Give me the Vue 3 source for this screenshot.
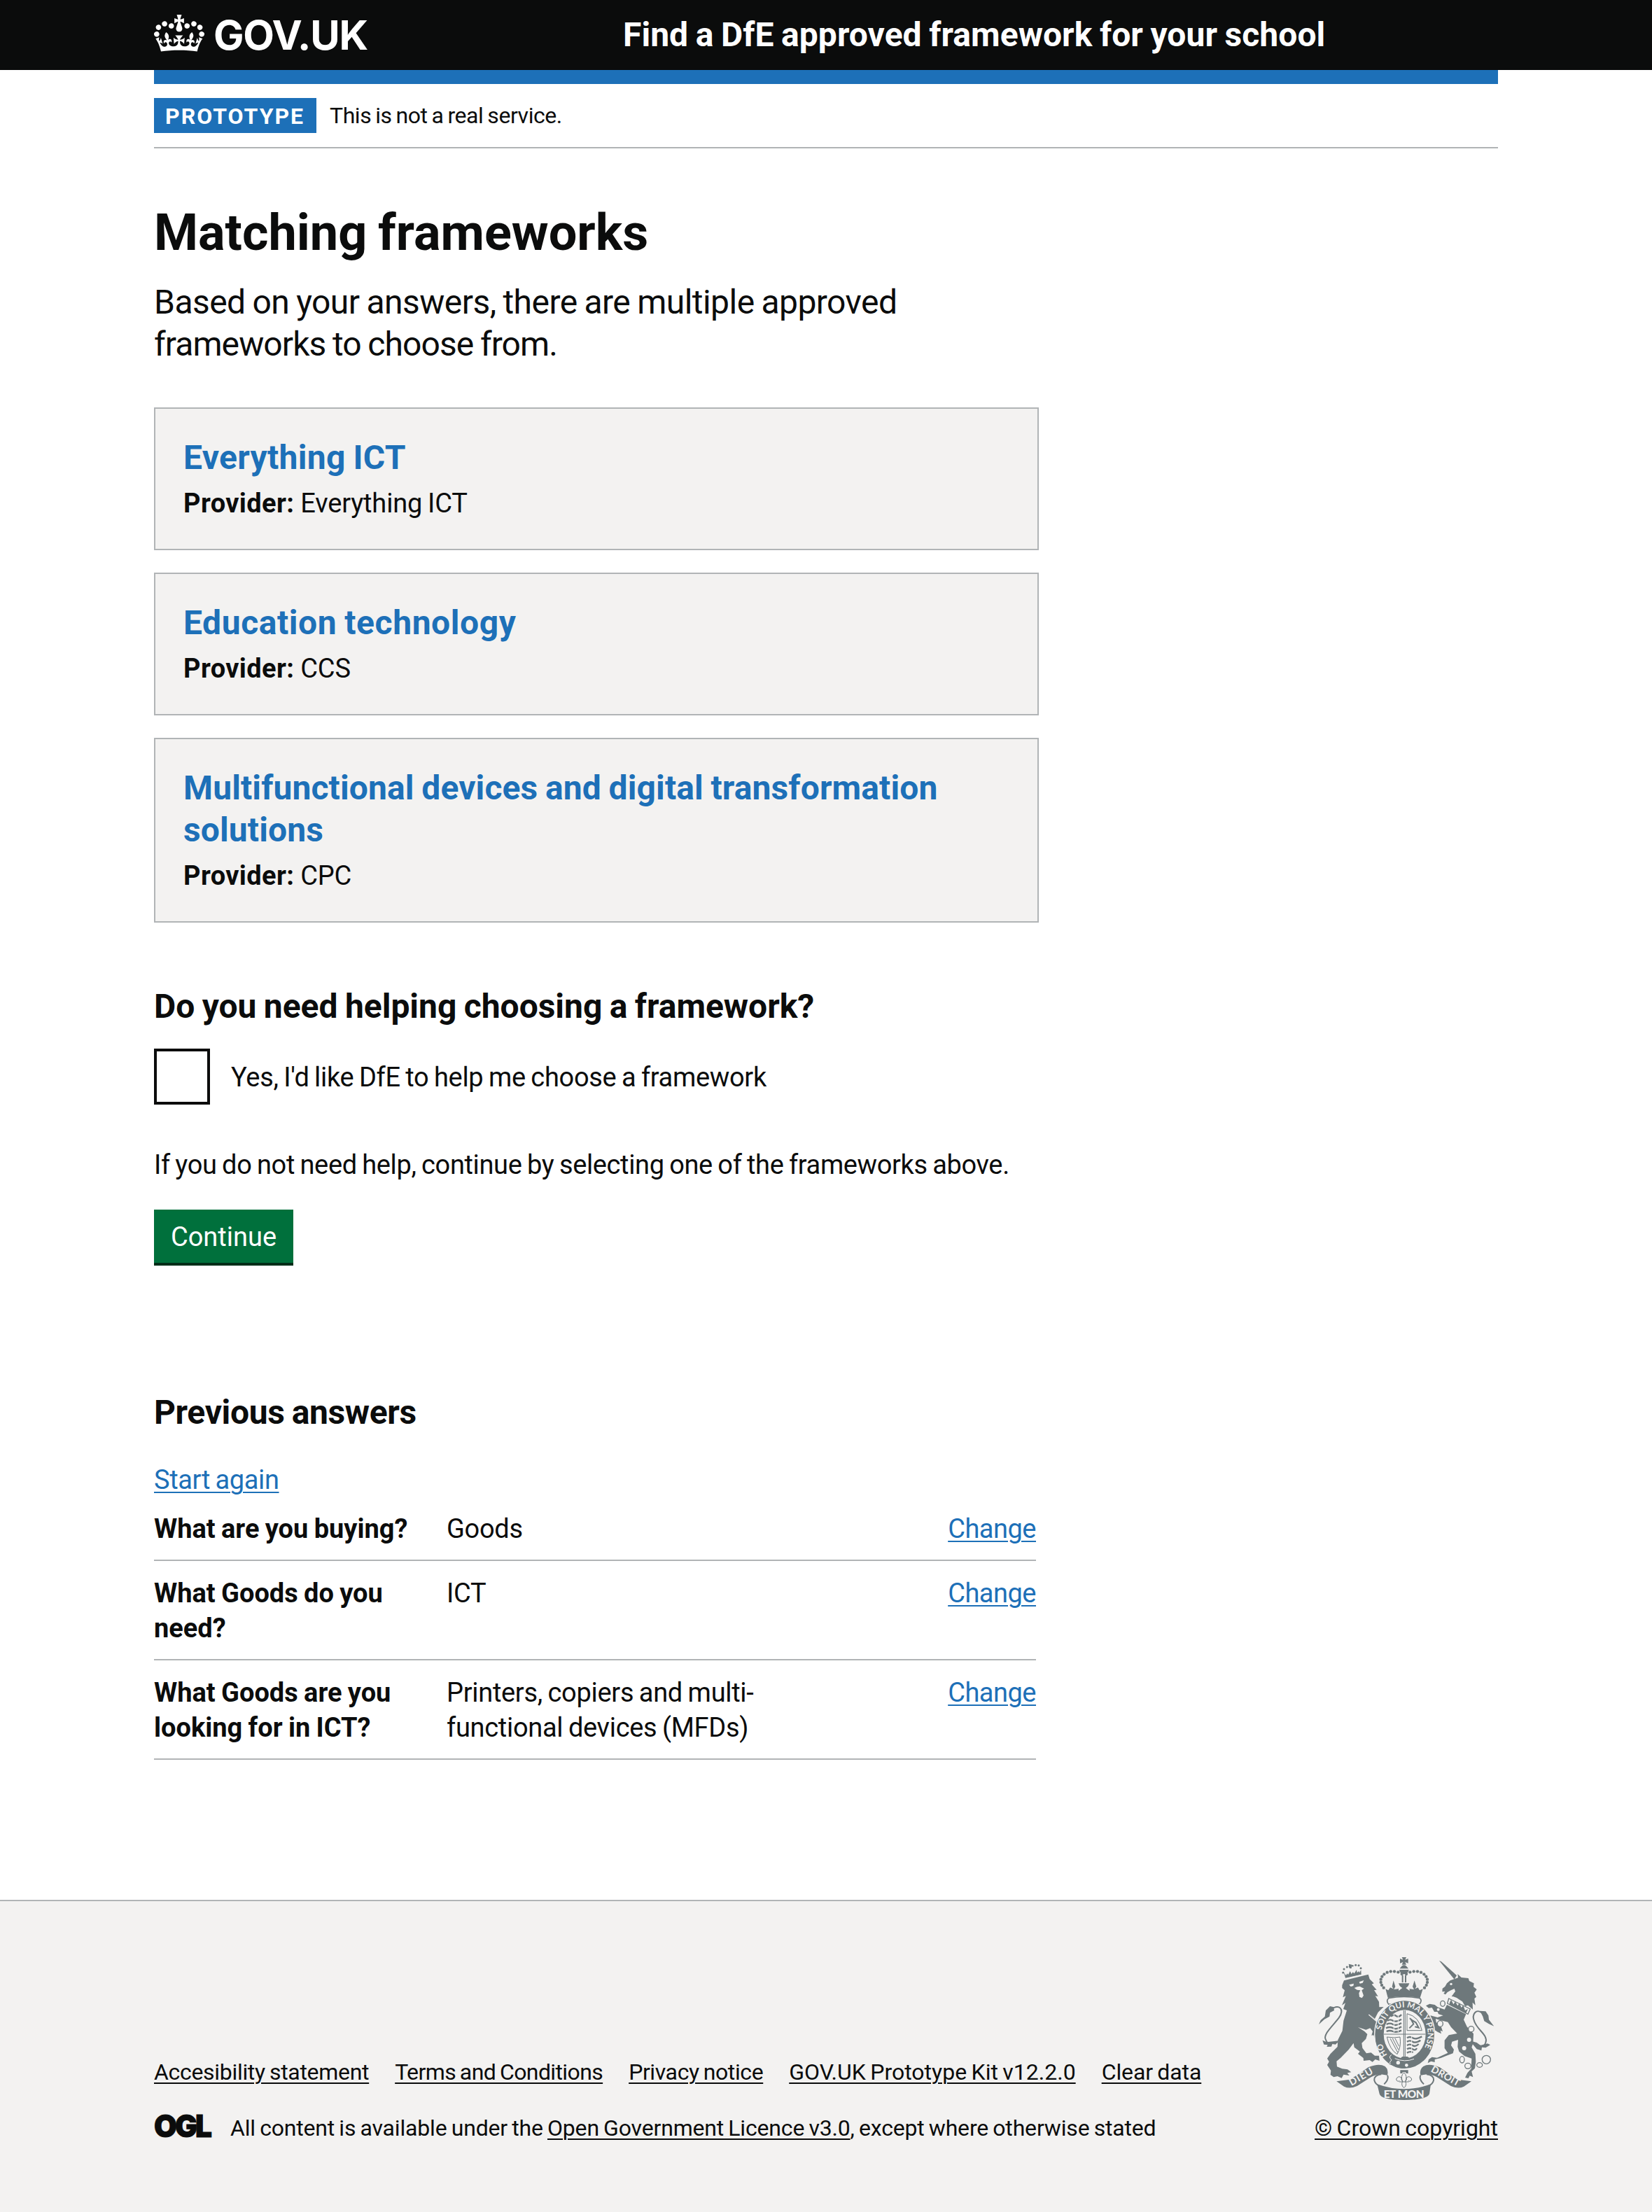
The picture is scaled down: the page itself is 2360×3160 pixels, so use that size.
<script setup>
const frameworks = [
  { id: 'everything', title: 'Everything ICT', provider: 'Everything ICT' },
  { id: 'education', title: 'Education technology', provider: 'CCS' },
  { id: 'multifunctional', title: 'Multifunctional devices and digital transformation solutions', provider: 'CPC' }
]

const answers = [
  { question: 'What are you buying?', answer: 'Goods' },
  { question: 'What Goods do you need?', answer: 'ICT' },
  { question: 'What Goods are you looking for in ICT?', answer: 'Printers, copiers and multi-functional devices (MFDs)' }
]

const footerLinks = [
  { id: 'accessibility', text: 'Accesibility statement' },
  { id: 'terms', text: 'Terms and Conditions' },
  { id: 'privacy', text: 'Privacy notice' },
  { id: 'kit', text: 'GOV.UK Prototype Kit v12.2.0' },
  { id: 'clear', text: 'Clear data' }
]

// Pearls along the left arch of the royal crown; the right arch mirrors them.
const pearls = [
  [428, 150], [412, 142], [396, 139], [380, 139], [365, 143], [352, 151],
  [343, 161], [338, 173], [338, 186], [342, 198], [350, 209]
]
</script>

<template>
  <div class="page">
    <header class="header">
      <div class="container header-inner">
        <a class="logo">
          <svg class="logo-crown" viewBox="0 0 132 97" aria-hidden="true">
            <path fill="currentColor" d="M25 30.2c3.5 1.5 7.7-.2 9.1-3.7 1.5-3.6-.2-7.8-3.9-9.2-3.6-1.4-7.6.3-9.1 3.9-1.4 3.5.3 7.5 3.9 9zM9 39.5c3.6 1.5 7.8-.2 9.2-3.7 1.5-3.6-.2-7.8-3.9-9.1-3.6-1.5-7.6.2-9.1 3.8-1.4 3.5.3 7.5 3.8 9zM4.4 57.2c3.5 1.5 7.7-.2 9.1-3.8 1.5-3.6-.2-7.7-3.9-9.1-3.5-1.5-7.6.3-9.1 3.8-1.4 3.5.3 7.6 3.9 9.1zm38.3-21.4c3.5 1.5 7.7-.2 9.1-3.8 1.5-3.6-.2-7.7-3.9-9.1-3.6-1.5-7.6.3-9.1 3.8-1.3 3.6.4 7.7 3.9 9.1zm64.4-5.6c-3.6 1.5-7.8-.2-9.1-3.7-1.5-3.6.2-7.8 3.8-9.2 3.6-1.4 7.7.3 9.2 3.9 1.3 3.5-.4 7.5-3.9 9zm15.9 9.3c-3.6 1.5-7.7-.2-9.1-3.7-1.5-3.6.2-7.8 3.7-9.1 3.6-1.5 7.7.2 9.2 3.8 1.5 3.5-.3 7.5-3.8 9zm4.7 17.7c-3.6 1.5-7.8-.2-9.2-3.8-1.5-3.6.2-7.7 3.9-9.1 3.6-1.5 7.7.3 9.2 3.8 1.3 3.5-.4 7.6-3.9 9.1zM89.3 35.8c-3.6 1.5-7.8-.2-9.2-3.8-1.4-3.6.2-7.7 3.9-9.1 3.6-1.5 7.7.3 9.2 3.8 1.4 3.6-.3 7.7-3.9 9.1zM69.7 17.7l8.9 4.7V9.3l-8.9 2.8c-.2-.3-.5-.6-.9-.9L72.4 0H59.6l3.5 11.2c-.3.3-.6.5-.9.9l-8.8-2.8v13.1l8.8-4.7c.3.3.6.7.9.9l-5 15.4v.1c-.2.8-.4 1.6-.4 2.4 0 4.1 3.1 7.5 7 8.1h.2c.3 0 .7.1 1 .1.4 0 .7 0 1-.1h.2c4-.6 7.1-4.1 7.1-8.1 0-.8-.1-1.7-.4-2.4V34l-5.1-15.4c.4-.2.7-.6 1-.9zM66 92.8c16.9 0 32.8 1.1 47.1 3.2 4-16.9 8.9-26.7 14-33.5l-9.6-3.4c1 4.9 1.1 7.2 0 10.2-1.5-1.4-3-4.3-4.2-8.7L108.6 76c2.8-2 5-3.2 7.5-3.3-4.4 9.4-10 11.9-13.6 11.2-4.3-.8-6.3-4.6-5.6-7.9 1-4.7 5.7-5.9 8-.5 4.3-8.7-3-11.4-7.6-8.8 7.1-7.2 7.9-13.5 2.1-21.1-8 6.1-8.1 12.3-4.5 20.8-4.7-5.4-12.1-2.5-9.5 6.2 3.4-5.2 7.9-2 7.2 3.1-.6 4.3-6.4 7.8-13.5 7.2-10.3-.9-10.9-8-11.2-13.8 2.5-.5 7.1 1.8 11 7.3L80.2 60c-4.1 4.4-8 5.3-12.3 5.4 1.4-4.4 8-11.6 8-11.6H55.5s6.4 7.2 7.9 11.6c-4.2-.1-8-1-12.3-5.4l1.4 16.4c3.9-5.5 8.5-7.7 10.9-7.3-.3 5.8-.9 12.8-11.1 13.8-7.2.6-12.9-2.9-13.5-7.2-.7-5 3.8-8.3 7.1-3.1 2.7-8.7-4.6-11.6-9.4-6.2 3.7-8.5 3.6-14.7-4.6-20.8-5.8 7.6-5 13.9 2.2 21.1-4.7-2.6-11.9.1-7.7 8.8 2.3-5.5 7.1-4.2 8.1.5.7 3.3-1.3 7.1-5.7 7.9-3.5.7-9-1.8-13.5-11.2 2.5.1 4.7 1.3 7.5 3.3l-4.7-15.4c-1.2 4.4-2.7 7.2-4.3 8.7-1.1-3-.9-5.3 0-10.2l-9.5 3.4c5 6.9 9.9 16.7 14 33.5 14.8-2.1 30.8-3.2 47.7-3.2z" />
          </svg>
          <span class="logo-text">GOV.UK</span>
        </a>
        <a class="service-name">Find a DfE approved framework for your school</a>
      </div>
    </header>

    <div class="container">
      <div class="blue-bar"></div>
      <div class="phase-banner">
        <strong class="tag">Prototype</strong>
        <span class="phase-text">This is not a real service.</span>
      </div>

      <main class="main">
        <h1 class="title">Matching frameworks</h1>
        <p class="lede">
          <span class="lede-line">Based on your answers, there are multiple approved</span>
          <span class="lede-line lede-last">frameworks to choose from.</span>
        </p>

        <ul class="cards">
          <li v-for="f in frameworks" :key="f.id" class="card">
            <h2 class="card-title" :class="f.id">{{ f.title }}</h2>
            <p class="card-provider"><strong>Provider:</strong> {{ f.provider }}</p>
          </li>
        </ul>

        <h2 class="heading help-heading">Do you need helping choosing a framework?</h2>
        <label class="checkbox">
          <span class="checkbox-box"></span>
          <span class="checkbox-label">Yes, I'd like DfE to help me choose a framework</span>
        </label>
        <p class="body-text">If you do not need help, continue by selecting one of the frameworks above.</p>
        <button class="button" type="button">Continue</button>

        <h2 class="heading previous-heading">Previous answers</h2>
        <a class="link start-again">Start again</a>
        <dl class="summary">
          <div v-for="a in answers" :key="a.question" class="summary-row">
            <dt class="summary-key">{{ a.question }}</dt>
            <dd class="summary-value">{{ a.answer }}</dd>
            <dd class="summary-action"><a class="link change">Change</a></dd>
          </div>
        </dl>
      </main>
    </div>

    <footer class="footer">
      <div class="container footer-inner">
        <div class="footer-meta">
          <ul class="footer-links">
            <li v-for="l in footerLinks" :key="l.id"><a class="footer-link" :class="l.id">{{ l.text }}</a></li>
          </ul>
          <div class="licence">
            <svg class="ogl" viewBox="0 0 82 34" aria-hidden="true">
              <text x="0" y="32.5" textLength="80" lengthAdjust="spacingAndGlyphs">OGL</text>
            </svg>
            <span class="licence-text">All content is available under the <a class="footer-link">Open Government Licence v3.0</a>, except where otherwise stated</span>
          </div>
        </div>

        <div class="copyright">
          <svg class="crest" viewBox="72 78 750 612" aria-hidden="true">
            <defs>
              <path id="garter-text" d="M371 503A100 116 0 0 1 341 412A99 115 0 1 1 440 523" />
            </defs>

            <!-- Lion -->
            <g transform="translate(60 60)" class="solid">
              <path d="M112 138L120 118 205 97 224 92 230 112 248 130 239 134 260 158 249 159 266 186 254 184 270 209 271 232 290 231 266 254 252 282 230 262 271 303 286 345 282 375 264 375 258 360 251 364 247 352 238 353 243 336 232 322 214 329 180 318 208 336 220 348 214 368 196 386 199 407 216 430 236 427 252 440 270 440 272 462 254 456 242 467 230 459 204 462 203 450 180 432 188 422 164 404 161 386 140 414 106 449 88 464 90 487 112 496 135 499 151 511 134 514 143 525 118 521 110 536 92 528 76 532 62 522 64 504 48 480 56 466 48 452 62 432 92 402 94 372 113 334 118 290 132 246 117 240 126 214 111 224 128 184 115 190 123 160 112 150z" />
              <path class="line" d="M60 244C100 215 124 240 98 278C70 315 28 350 42 372C50 396 72 388 92 382" />
              <path d="M12 306L20 288 38 272 42 246 60 228 76 232 78 246 60 256 58 272 36 284zM28 374L46 382 98 376 84 392 70 390 66 401 46 402 50 394 34 392z" />
              <path d="M126 107L119 82 128 96 134 88 138 93 146 78 152 90 158 82 164 88 174 72 176 84 184 78 186 85 193 73 194 92z" />
              <circle cx="116" cy="84" r="4.5" /><circle cx="120" cy="69" r="4.5" /><circle cx="133" cy="60" r="4.5" /><circle cx="170" cy="52" r="4.5" /><circle cx="183" cy="53" r="4.5" /><circle cx="192" cy="65" r="4.5" /><circle cx="157" cy="55" r="4" /><circle cx="145" cy="58" r="4.5" />
              <path d="M140 47L154 50 152 66 144 66z" />
              <path class="paper" d="M142 136L162 131 160 141 149 144zM185 124L205 117 200 128 188 131zM164 150L176 145 188 143 196 148 206 152 196 160 204 182 197 193 186 188 184 172 190 160 176 158z" />
              <path class="paper-line" d="M128 111L222 88" />
              <path class="paper-line" d="M226 264L272 304" />
            </g>

            <!-- Unicorn -->
            <g transform="translate(435 60)" class="solid">
              <path d="M153 33L162 37 228 96 218 113z" />
              <path d="M200 118L234 106 232 90 248 105 278 108 282 120 302 130 300 145 314 156 304 170 312 188 304 195 308 224 296 212 297 242 276 224 264 228 252 208 240 200 228 192 214 187 206 186 222 164 218 153 203 160 188 168 180 178 172 174 178 165 166 166 167 152 178 144 186 130z" />
              <path class="outline" d="M194 195L286 240 276 262 188 216z" />
              <path d="M198 212L204 200 214 220 222 208 232 226 240 214 248 234 256 224 264 246 276 240 268 258 196 222z" />
              <path d="M186 222L268 262 258 286 272 316 300 346 298 388 292 404 308 432 310 466 306 494 292 508 298 532 284 526 278 537 264 534 274 514 290 496 292 452 262 442 238 422 232 402 234 372 208 380 204 396 216 414 212 430 184 440 160 450 134 456 134 468 118 464 104 472 108 456 122 446 144 449 190 428 176 408 176 374 194 352 230 345 204 318 190 296 160 289 138 282 140 296 162 318 168 336 158 332 162 346 146 338 130 328 124 302 108 278 116 268 146 276 170 268 150 262 146 252 132 252 122 234 108 236 96 226 112 218 134 222 146 232 176 242z" />
              <path class="line" d="M338 258C312 236 290 262 304 294C318 332 364 352 352 384C346 402 330 402 312 392" />
              <path d="M328 248L352 250 364 268 366 286 388 314 366 304 346 292 340 272zM284 376L314 384 330 396 360 388 372 394 352 406 336 404 334 418 314 412z" />
              <circle class="paper" cx="281" cy="372" r="9" /><circle class="paper" cx="260" cy="408" r="9" />
              <circle class="paper" cx="149" cy="242" r="6" /><circle class="paper" cx="204" cy="133" r="5" />
              <ellipse class="outline" cx="168" cy="217" rx="10" ry="12" />
              <ellipse class="outline" cx="157" cy="303" rx="12" ry="13" />
              <ellipse class="outline" cx="290" cy="326" rx="12" ry="12" />
              <ellipse class="outline" cx="251" cy="457" rx="10" ry="14" />
              <ellipse class="outline" cx="276" cy="484" rx="13" ry="12" />
              <ellipse class="outline" cx="326" cy="480" rx="12" ry="10" />
              <circle class="outline" cx="355" cy="457" r="18" />
            </g>

            <!-- Royal crown -->
            <g class="solid">
              <path d="M428 78H447L442 89 455 84V104L442 99 447 110H428L433 99 420 104V84L433 89zM419 127Q437 96 456 127zM417 132H458Q454 150 437 151Q420 149 417 132z" />
              <path d="M428 156H434V186H428zM441 156H447V186H441z" />
              <g v-for="p in pearls" :key="p[0] + '-' + p[1]">
                <circle :cx="p[0]" :cy="p[1]" r="6.5" />
                <circle :cx="875 - p[0]" :cy="p[1]" r="6.5" />
              </g>
              <path d="M358 214L370 220 378 208 392 214 386 204 392 178 400 204 394 216 412 214 420 204 414 190H460L454 204 462 214 480 216 474 204 482 178 490 204 484 214 497 208 504 220 518 214 506 252Q437 240 368 252z" />
              <path class="paper" d="M414 198L430 210 414 222zM461 198L445 210 461 222z" />
              <path class="outline thick" d="M372 253Q437 242 503 253Q518 262 503 280Q437 266 372 280Q358 264 372 253z" />
            </g>

            <!-- Garter and shield -->
            <ellipse class="solid halo" cx="440" cy="410" rx="129" ry="147" />
            <ellipse class="paper" cx="440" cy="408" rx="90" ry="104" />
            <path class="line thin" d="M350 408H530M436 306V510M442 306V510" />
            <path class="line quarters" d="M380 332Q392 322 404 330T426 324M366 350Q378 342 390 350T426 344M362 366Q376 358 390 366T426 360M360 382Q376 374 390 382T426 376M362 396Q376 390 390 396T426 392M450 424Q462 416 474 424T514 418M450 440Q462 432 474 440T508 434M450 456Q462 448 474 456T500 450M450 472Q462 464 474 472T492 468M450 488Q462 480 476 486" />
            <path class="paper-line thin" d="M394 322V400M412 316V400M470 412V494" />
            <path class="line thin" d="M450 320Q502 332 514 392H450zM364 420Q398 426 420 420Q426 462 408 494Q376 474 364 420M378 426L410 486M388 426L413 474M399 426L416 460" />
            <path class="line" d="M460 382L478 364 468 346 488 358 500 380 484 376M462 340L476 352" />
            <path class="solid" d="M430 504H452L466 514H418zM360 500Q378 488 398 500 404 512 394 524 392 540 374 538L376 524 364 518z" />
            <path class="paper-line thin" d="M384 496Q368 506 384 518Q372 530 378 536M398 512Q440 530 480 514" />
            <circle class="paper" cx="412" cy="530" r="8" /><circle class="paper" cx="448" cy="541" r="7" />
            <text class="motto">
              <textPath href="#garter-text" startOffset="8">HO<tspan dx="56">SOIT QUI MAL Y PENSE</tspan></textPath>
            </text>

            <!-- Ribbon -->
            <g class="solid">
              <path d="M148 610L206 602 250 574 284 550Q330 530 356 546Q372 560 366 584L338 580Q318 580 296 592L236 630Q204 644 180 632z" />
              <path d="M726 610L668 602 624 574 590 550Q544 530 520 546Q502 560 508 584L536 580Q556 580 578 592L638 630Q670 644 694 632z" />
              <path d="M322 622Q437 664 552 622L546 664Q536 690 437 690Q338 690 332 664z" />
            </g>
            <path class="line" d="M340 580Q308 584 310 606Q314 622 332 630M366 584Q374 600 352 622M534 580Q566 584 564 606Q560 622 542 630M508 584Q500 600 522 622" />
            <text class="ribbon-text" x="0" y="0" textLength="110" transform="translate(212 630) rotate(-30)">DIEU</text>
            <text class="ribbon-text" x="0" y="0" textLength="134" transform="translate(550 567) rotate(29)">DROIT</text>
            <text class="ribbon-text et-mon" x="350" y="681" textLength="174">ET MON</text>
            <path class="solid" d="M421 562H455V576H448L442 570H433L428 576H421z" />
            <path class="line thin" d="M437 572Q420 588 432 612Q424 604 426 594Q412 584 404 600Q406 614 418 608M437 572Q454 588 442 612Q450 604 448 594Q462 584 470 600Q468 614 456 608M416 612H458M430 612Q424 628 437 638Q450 628 444 612" />
          </svg>
          <a class="footer-link crown-link">© Crown copyright</a>
        </div>
      </div>
    </footer>
  </div>
</template>

<style>
body {
  margin: 0;
  background: #fff;
}
</style>

<style scoped>
.page {
  --text: #0b0c0c;
  --blue: #1d70b8;
  --border: #b1b4b6;
  --light: #f3f2f1;
  --crest: #6e787b;
  display: flex;
  flex-direction: column;
  min-height: 3160px;
  font-family: Roboto, "Noto Sans", "Liberation Sans", sans-serif;
  font-size: 38px;
  line-height: 50px;
  word-spacing: -0.04em;
  color: var(--text);
}

.container {
  width: 1920px;
  margin: 0 auto;
}

h1, h2, p, ul, dl, dd {
  margin: 0;
  padding: 0;
}

ul {
  list-style: none;
}

/* Header */
.header {
  height: 100px;
  background: var(--text);
  color: #fff;
}

.header-inner {
  display: flex;
  align-items: center;
  height: 100px;
}

.logo {
  display: flex;
  align-items: center;
  width: 670px;
}

.logo-crown {
  width: 72px;
  height: 53px;
  margin: -5px 13px 0 0;
}

.logo-text {
  font: 700 58px/60px Inter, sans-serif;
  letter-spacing: -1.2px;
}

.service-name {
  font-size: 48px;
  font-weight: 700;
  line-height: 60px;
  letter-spacing: 0.05px;
  word-spacing: -0.03em;
  white-space: nowrap;
}

.blue-bar {
  height: 20px;
  background: var(--blue);
}

.phase-banner {
  display: flex;
  gap: 19px;
  padding: 20px 0;
  border-bottom: 2px solid var(--border);
  font-size: 32px;
}

.tag {
  width: 232px;
  height: 50px;
  box-sizing: border-box;
  padding-left: 16px;
  background: var(--blue);
  color: #fff;
  letter-spacing: 2px;
  line-height: 52px;
  text-transform: uppercase;
}

.phase-text {
  letter-spacing: -0.45px;
}

/* Content */
.main {
  width: 1264px;
  padding: 81px 0 200px;
}

.title {
  font-size: 72px;
  font-weight: 700;
  line-height: 80px;
  word-spacing: -0.03em;
}

.lede {
  margin-top: 29px;
  font-size: 48px;
  line-height: 60px;
  letter-spacing: -0.53px;
}

.lede-line {
  display: block;
  white-space: nowrap;
}

.lede-last {
  letter-spacing: -0.9px;
}

.cards {
  display: flex;
  flex-direction: column;
  gap: 32px;
  margin-top: 60px;
}

.card {
  padding: 40px;
  border: 2px solid var(--border);
  background: var(--light);
}

.card-title {
  color: var(--blue);
  font-size: 48px;
  font-weight: 700;
  line-height: 60px;
  word-spacing: -0.03em;
}

.card-title.everything {
  letter-spacing: 0.3px;
}

.card-title.education {
  letter-spacing: 0.57px;
}

.card-title.multifunctional {
  letter-spacing: 0.12px;
}

.card-provider {
  margin-top: 10px;
  letter-spacing: -0.15px;
}

.card-provider strong {
  margin-right: 1px;
  letter-spacing: 0.4px;
}

.heading {
  font-size: 48px;
  font-weight: 700;
  line-height: 60px;
  word-spacing: -0.03em;
}

.help-heading {
  margin-top: 90px;
  letter-spacing: -0.03px;
}

.checkbox {
  display: flex;
  align-items: center;
  gap: 30px;
  margin-top: 30px;
}

.checkbox-box {
  width: 80px;
  height: 80px;
  box-sizing: border-box;
  border: 4px solid var(--text);
}

.checkbox-label {
  padding-top: 2px;
  letter-spacing: -0.32px;
}

.body-text {
  margin-top: 61px;
  letter-spacing: -0.37px;
  white-space: nowrap;
}

.button {
  display: block;
  width: 199px;
  height: 76px;
  margin: 39px 0 0;
  padding: 2px 0 0;
  border: 0;
  background: #00703c;
  box-shadow: 0 4px 0 #002d18;
  color: #fff;
  font: inherit;
  text-align: center;
}

.previous-heading {
  margin-top: 184px;
  letter-spacing: -0.35px;
}

.link {
  color: var(--blue);
  text-decoration: underline;
  text-decoration-thickness: 2px;
  text-underline-offset: 4px;
}

.start-again {
  display: inline-block;
  margin-top: 41px;
  letter-spacing: -0.38px;
  vertical-align: top;
}

.summary {
  width: 1260px;
  margin-top: -1px;
}

.summary-row {
  display: flex;
  padding: 21px 0 19px;
  border-bottom: 2px solid var(--border);
}

.summary-key {
  width: 378px;
  margin-right: 40px;
  font-weight: 700;
  word-spacing: -0.03em;
}

.summary-value {
  flex: 1;
  max-width: 480px;
  letter-spacing: -0.3px;
}

.summary-action {
  margin-left: auto;
}

.change {
  letter-spacing: -0.5px;
}

/* Footer */
.footer {
  flex: 1;
  border-top: 2px solid var(--border);
  background: var(--light);
  font-size: 32px;
  line-height: 40px;
}

.footer-inner {
  display: flex;
  align-items: flex-end;
  justify-content: space-between;
  padding: 80px 0 100px;
}

.footer-links {
  display: flex;
  gap: 37px;
}

.footer-link {
  text-decoration: underline;
  text-decoration-thickness: 2px;
  text-underline-offset: 4px;
  white-space: nowrap;
}

.accessibility { letter-spacing: -0.31px; }
.terms { letter-spacing: -0.61px; }
.privacy { letter-spacing: -0.4px; }
.kit { letter-spacing: 0; }
.clear { letter-spacing: -0.1px; }

.licence {
  display: flex;
  margin-top: 40px;
}

.ogl {
  width: 82px;
  height: 34px;
  margin-right: 27px;
  overflow: visible;
}

.ogl text {
  font: 900 44px Inter, sans-serif;
  letter-spacing: -3px;
  fill: var(--text);
  stroke: var(--text);
  stroke-width: 1px;
}

.licence-text {
  letter-spacing: -0.18px;
  white-space: nowrap;
}

.copyright {
  display: flex;
  flex-direction: column;
  align-items: center;
  width: 262px;
}

.crest {
  width: 250px;
  height: 204px;
  margin-bottom: 20px;
}

.crown-link {
  letter-spacing: 0;
}

/* Coat of arms */
.solid { fill: var(--crest); }
.paper { fill: var(--light); }
.halo { stroke: var(--light); stroke-width: 4px; }
.line { fill: none; stroke: var(--crest); stroke-width: 6px; }
.outline { fill: var(--light); stroke: var(--crest); stroke-width: 4px; }
.paper-line { fill: none; stroke: var(--light); stroke-width: 4px; }
.thin { stroke-width: 3px; }
.thick { stroke-width: 5px; }
.quarters { stroke-width: 7px; }

.motto,
.ribbon-text {
  fill: var(--light);
  font: 700 35px Lato, sans-serif;
  word-spacing: 0;
}

.ribbon-text {
  font-size: 42px;
}

.et-mon {
  font-size: 46px;
  font-weight: 900;
}
</style>
